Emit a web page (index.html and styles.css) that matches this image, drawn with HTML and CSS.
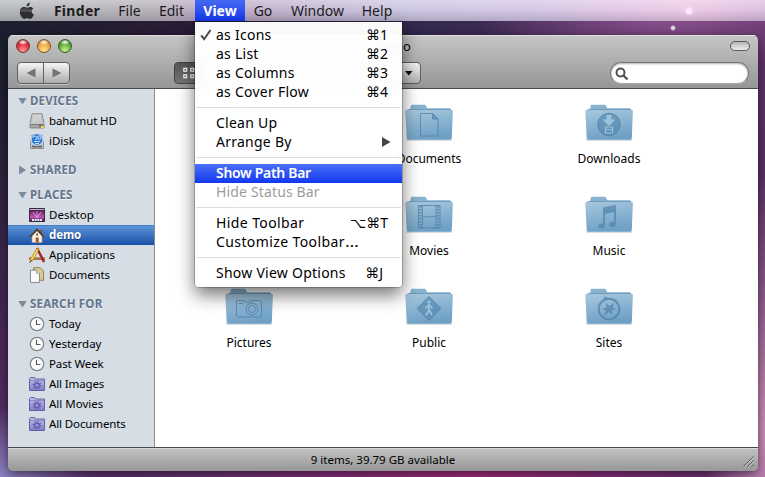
FILE: index.html
```html
<!DOCTYPE html>
<html lang="en">
<head>
<meta charset="utf-8">
<title>Finder</title>
<link rel="stylesheet" href="styles.css">
</head>
<body>
<svg class="defs" width="0" height="0" aria-hidden="true">
  <defs>
    <linearGradient id="fg" x1="0" y1="0" x2="0.25" y2="1"><stop offset="0" stop-color="#a9c9de"/><stop offset="1" stop-color="#6fa1c6"/></linearGradient>
    <linearGradient id="sg" x1="0" y1="0" x2="0" y2="1"><stop offset="0" stop-color="#c3c0ee"/><stop offset="1" stop-color="#837cc4"/></linearGradient>
    <linearGradient id="dg" x1="0" y1="0" x2="0" y2="1"><stop offset="0" stop-color="#351040"/><stop offset=".65" stop-color="#c058b0"/><stop offset="1" stop-color="#301a50"/></linearGradient>
    <symbol id="folder" viewBox="0 0 48 37">
      <path d="M.6 35.4h46.2v1.2H1.5z" fill="#6a7f90" opacity=".5"/>
      <path d="M2 5.500h3l.8-3.700Q6 .8 7 .8h12.500q1 0 1.500 1l1.300 2.500h22q1.700 0 1.700 2V9H2z" fill="#88b2ce"/>
      <path d="M.3 7.300Q.2 6 1.500 6h2L5 5h40l1 1h.7q1.300 0 1.200 1.300L46.800 34q-.1 1.700-1.500 1.700H3.200q-1.400 0-1.500-1.700z" fill="url(#fg)"/>
      <path d="M3.500 5.500H46" stroke="#6c9dbd" fill="none"/>
    </symbol>
    <symbol id="clock" viewBox="0 0 16 16">
      <circle cx="8" cy="8" r="6.700" fill="#fdfdfd" stroke="#85878b" stroke-width="1.300"/>
      <path d="M7.500 3.800v4.700h4" fill="none" stroke="#55585c" stroke-width="1.100"/>
    </symbol>
    <symbol id="smart" viewBox="0 0 16 16">
      <path d="M.5 14.500v-12l1-1h4l1 1.500h9v11.500z" fill="url(#sg)" stroke="#6560a5"/>
      <path d="M1 4.500h14" stroke="#8f8bc8"/>
      <circle cx="8" cy="9.300" r="2.300" fill="none" stroke="#6560b0" stroke-width="1.500"/>
      <circle cx="8" cy="9.300" r="3.600" fill="none" stroke="#6560b0" stroke-width="1.300" stroke-dasharray="1.400 1.400"/>
    </symbol>
  </defs>
</svg>

<header class="menubar">
  <svg class="apple" viewBox="0 0 16 18" width="16" height="18"><path d="M10.800.5q.2 1.700-.8 2.900T7.600 4.500q-.2-1.600.8-2.700T10.800.5z" fill="#333"/><path d="M8 5.700c.9 0 1.700-.8 3.300-.8 1.300 0 2.400.6 3 1.600-2.600 1.600-2.200 4.900.6 6-.7 2.100-2.200 4.400-3.700 4.400-1.100 0-1.500-.7-2.900-.7s-1.900.7-2.900.7C3.300 16.900.8 13.100.8 9.800c0-3 1.900-4.800 4-4.800 1.400 0 2.300.7 3.200.7z" fill="#2d2d2f"/><path d="M1.500 8Q4 5.500 8 6.500t5-.3Q11.500 8 12 10H1z" fill="#777" opacity=".45"/></svg>
  <span class="mb finder">Finder</span><span class="mb file">File</span><span class="mb edit">Edit</span><span class="mb view">View</span><span class="mb go">Go</span><span class="mb win">Window</span><span class="mb help">Help</span>
</header>

<main class="window">
  <div class="titlebar">
    <div class="lights"><i class="red"></i><i class="amber"></i><i class="green"></i></div>
    <div class="title">demo</div>
    <div class="pill"></div>
  </div>
  <div class="toolbar">
    <div class="nav"><span><svg width="10" height="10"><path d="M9.500 .5v9L.5 5z" fill="#747474"/></svg></span><span><svg width="10" height="10"><path d="M.5 .5v9l9-4.500z" fill="#747474"/></svg></span></div>
    <div class="viewbtn"><svg width="12" height="12"><g fill="none" stroke="#fff" stroke-width="1.200"><path d="M.8 1.300h2.900v2.900H.8zM7.800 1.300h2.900v2.900H7.800zM.8 7.800h2.900v2.900H.8zM7.800 7.800h2.900v2.900H7.800z"/></g></svg></div>
    <div class="action"><svg width="8" height="5"><path d="M0 0h7.500L3.800 4.500z" fill="#111"/></svg></div>
    <div class="search"><svg width="14" height="14"><circle cx="5.500" cy="5.500" r="4" fill="none" stroke="#505050" stroke-width="2"/><path d="M8.500 8.500l4 4" stroke="#505050" stroke-width="2.300"/></svg></div>
  </div>
  <div class="body">
    <nav class="sidebar">
      <h2 class="devices"><b class="down"></b><span>DEVICES</span></h2>
      <div class="row"><svg class="ic" viewBox="0 0 16 16"><path d="M3 .8h10l2 9.700v4.500H1v-4.500z" fill="#c8c8c8" stroke="#8c8c8c"/><path d="M4 2.500h8l1 6H3z" fill="#e9e9e9"/><path d="M3.500 4h9M3.200 6h10M3 8h10.500" stroke="#b5b5b5"/><path d="M1.500 11h13v3.500h-13z" fill="#777"/><path d="M3 12v2M5 12v2M7 12v2M9 12v2" stroke="#ddd"/><path d="M12 14h2.500" stroke="#ffe23a" stroke-width="2"/></svg><span class="tight">bahamut HD</span></div>
      <div class="row"><svg class="ic" viewBox="0 0 16 16"><path d="M3 2h10l1.500 9v4.500h-13V11z" fill="#c8c8c8" stroke="#8d8d8d"/><path d="M3 13.500h10" stroke="#666" stroke-width="2"/><circle cx="8" cy="6.500" r="5.900" fill="#3277d0" stroke="#d5e6fa"/><path d="M4 5q0-2 2-2t2 2-2 2M9 3h3v3H9zM5 8.500h6M6 10.500h4" stroke="#b5dcff" fill="none"/></svg><span>iDisk</span></div>
      <h2 class="shared"><b class="right"></b><span>SHARED</span></h2>
      <h2 class="places"><b class="down"></b><span>PLACES</span></h2>
      <div class="row"><svg class="ic" viewBox="0 0 16 16"><path d="M.5 1.500h15v13H.5z" fill="url(#dg)" stroke="#3a2745"/><path d="M1 2.500h14" stroke="#ddd" stroke-width=".8"/><path d="M8 11L4 5M8 11V4M8 11l4-6" stroke="#e7a6dc" stroke-width=".8"/><path d="M3 13h10" stroke="#eef" stroke-width="1.800" stroke-dasharray="2 .7"/></svg><span>Desktop</span></div>
      <div class="row selected"><svg class="ic" viewBox="0 0 16 16"><path d="M11 2h2v5h-2z" fill="#815233"/><path d="M3 8l5-5 5 5v6.500H3z" fill="#f6efe2" stroke="#a69a89" stroke-width=".6"/><path d="M1 9l7-7.500L15 9" fill="none" stroke="#5a3b27" stroke-width="1.600"/><path d="M6.700 9.500h3v5h-3z" fill="#b14e20"/><path d="M7.400 5.500h1.500v2H7.400z" fill="#4c3429"/></svg><span class="tight">demo</span></div>
      <div class="row"><svg class="ic" viewBox="0 0 16 16"><path d="M0 11.500h16" stroke="#80512c" stroke-width="2.500"/><path d="M0 11h16" stroke="#d2a269" stroke-width="1.200"/><path d="M8 1l7 14" stroke="#a82024" stroke-width="2.400"/><path d="M9 1.500L2 14" stroke="#ae7d23" stroke-width="3"/><path d="M8.500 2.500L2.200 13.500" stroke="#f4dc55" stroke-width="1.800"/><path d="M2.500 13L.7 16" stroke="#5b3519"/></svg><span>Applications</span></div>
      <div class="row"><svg class="ic" viewBox="0 0 16 16"><path d="M4.500.7h6.700l3.300 3.300v9.300h-10z" fill="#d7cb91" stroke="#8f875f"/><path d="M1.500 3.200h5.800l3.200 3.200v9.100h-9z" fill="#fafafa" stroke="#8c8c8c"/><path d="M7.300 3.200v3.200h3.200" fill="#ddd" stroke="#999" stroke-width=".7"/></svg><span class="tight">Documents</span></div>
      <h2 class="searchfor"><b class="down"></b><span>SEARCH FOR</span></h2>
      <div class="row"><svg class="ic"><use href="#clock"/></svg><span>Today</span></div>
      <div class="row"><svg class="ic"><use href="#clock"/></svg><span>Yesterday</span></div>
      <div class="row"><svg class="ic"><use href="#clock"/></svg><span class="tight">Past Week</span></div>
      <div class="row"><svg class="ic"><use href="#smart"/></svg><span class="tight">All Images</span></div>
      <div class="row"><svg class="ic"><use href="#smart"/></svg><span>All Movies</span></div>
      <div class="row"><svg class="ic"><use href="#smart"/></svg><span class="tight">All Documents</span></div>
    </nav>
    <section class="files">
      <figure><svg viewBox="0 0 48 37"><use href="#folder"/></svg></figure>
      <figure><svg viewBox="0 0 48 37"><use href="#folder"/><g class="em"><path d="M15.500 9.500h12l5.500 5.500v17H15.500z"/><path d="M27.500 9.500V15H33z" class="solid"/></g></svg><figcaption>Documents</figcaption></figure>
      <figure><svg viewBox="0 0 48 37"><use href="#folder"/><circle cx="24" cy="20.500" r="11.300" class="solid"/><path d="M21.500 11h5v4.500h4L24 22l-6.500-6.500h4z" fill="#9cc3dc"/><path d="M20.500 23h7v6h-7zM20.500 25.500h7" fill="none" stroke="#9cc3dc" stroke-width="1.200"/></svg><figcaption>Downloads</figcaption></figure>
      <figure><svg viewBox="0 0 48 37"><use href="#folder"/></svg></figure>
      <figure><svg viewBox="0 0 48 37"><use href="#folder"/><g class="em"><path d="M13.500 9.500h21.500v22.500H13.500zM17.500 9.500v22.500M31 9.500v22.500M17.500 20.800H31"/><path d="M15.500 10v22M33 10v22" stroke-width="2.500" stroke-dasharray="1.500 1.500"/></g></svg><figcaption>Movies</figcaption></figure>
      <figure><svg viewBox="0 0 48 37"><use href="#folder"/><path fill-rule="evenodd" d="M18 11.500L31 9v18q0 4-3.500 4T24 28.500t5-3V16l-9 2v11q0 3.500-3.500 3.500T13 30.200t5-3z" class="music"/></svg><figcaption>Music</figcaption></figure>
      <figure><svg viewBox="0 0 48 37"><use href="#folder"/><g class="em"><path d="M11.500 14q0-1.500 1.500-1.500h6l1 1.500h5l1-1.500h9q1.500 0 1.500 1.500v13q0 2-2 2h-21q-2 0-2-2z"/><circle cx="27" cy="21" r="6"/><circle cx="27" cy="21" r="3.500"/><path d="M14 15.500h4"/></g></svg><figcaption>Pictures</figcaption></figure>
      <figure><svg viewBox="0 0 48 37"><use href="#folder"/><path d="M24 8.500L36 20.500l-12 12-12-12z" class="solid"/><circle cx="24" cy="14" r="1.600" fill="#9cc3dc"/><path d="M24 16v6l-3 5.500M24 21.500l3 5.500M20.500 20.500L24 16.500l3.300 4" fill="none" stroke="#9cc3dc" stroke-width="1.700"/></svg><figcaption>Public</figcaption></figure>
      <figure><svg viewBox="0 0 48 37"><use href="#folder"/><g class="em"><circle cx="24" cy="21" r="10.300" stroke-width="2"/><circle cx="20.500" cy="10" r="1.200"/></g><path d="M29.500 14.500l-2 5 4 1.500-4.500 1.500.5 4.500-3.500-3-5.500 4 2.500-5.500-4-1.500 4.500-1.500-.5-4.500 3.500 3z" class="music"/></svg><figcaption>Sites</figcaption></figure>
    </section>
  </div>
  <footer class="status"><span>9 items, 39.79 GB available</span><svg class="grip" width="11" height="11"><path d="M.5 10.500l10-10M4.500 10.500l6-6M8.500 10.500l2-2" stroke="#555"/><path d="M1.700 10.700l9-9M5.700 10.700l5-5" stroke="#ddd" stroke-width=".7"/></svg></footer>
</main>

<div class="menu">
  <div class="mi"><svg class="check" width="12" height="12"><path d="M1.200 6.500l3 3.700L10.500 1" fill="none" stroke="#4c4c4c" stroke-width="2"/></svg><span>as Icons</span><kbd>⌘1</kbd></div>
  <div class="mi"><span>as List</span><kbd>⌘2</kbd></div>
  <div class="mi"><span>as Columns</span><kbd>⌘3</kbd></div>
  <div class="mi"><span>as Cover Flow</span><kbd>⌘4</kbd></div>
  <hr>
  <div class="mi"><span>Clean Up</span></div>
  <div class="mi"><span>Arrange By</span><svg class="sub" width="9" height="10"><path d="M0 0v10l8.500-5z" fill="#444"/></svg></div>
  <hr>
  <div class="mi hot"><span>Show Path Bar</span></div>
  <div class="mi off"><span>Hide Status Bar</span></div>
  <hr>
  <div class="mi"><span class="wide">Hide Toolbar</span><kbd>⌥⌘T</kbd></div>
  <div class="mi"><span class="wide">Customize Toolbar<span class="dots">…</span></span></div>
  <hr>
  <div class="mi"><span>Show View Options</span><kbd class="j">⌘J</kbd></div>
</div>
</body>
</html>
```
FILE: styles.css
```css
* { box-sizing: border-box; }
body {
  margin: 0; width: 765px; height: 477px; overflow: hidden; position: relative;
  font-family: "Noto Sans", "Open Sans", "DejaVu Sans", sans-serif; color: #000;
  background:
    radial-gradient(circle at 673px 28px, #ddd 0 1.500px, transparent 3px),
    radial-gradient(ellipse 190px 50px at 665px 18px, rgba(160,90,160,.75), transparent),
    radial-gradient(ellipse 60px 260px at 765px 430px, #c98bb5, transparent),
    radial-gradient(ellipse 90px 70px at 0 477px, #8a80c0, transparent),
    radial-gradient(ellipse 330px 60px at 470px 477px, #9a2878, transparent),
    linear-gradient(180deg, transparent 0, transparent 80px, #4a2858 360px, #56306a 477px),
    linear-gradient(90deg, #1c1f2d 0, #2b1c35 180px, #33284e 420px, #5b3263 765px);
}
.defs { position: absolute; }
.menubar {
  height: 21px; display: flex; align-items: center;
  background:
    radial-gradient(circle at 689px 11px, #ffe8ff 0 2px, transparent 5px),
    linear-gradient(180deg, rgba(255,255,255,.3), rgba(255,255,255,0) 50%, rgba(70,70,90,.22)),
    linear-gradient(90deg, #b4b8bb 0, #b7b2b9 150px, #bcaac0 190px, #c2b2cc 260px, #cbc5df 400px, #d6c6e4 550px, #edc9e6 690px, #dbbede 765px);
}
.apple { margin-left: 19px; margin-right: 8px; }
.mb { height: 21px; line-height: 22px; font-size: 14px; color: #1c1c1e; text-align: center; white-space: nowrap; }
.finder { width: 68px; font-weight: 700; letter-spacing: .3px; }
.file { width: 37px; } .edit { width: 47px; }
.view { width: 50px; color: #fff; font-weight: 700; background: linear-gradient(#4469f0, #1638ef); }
.go { width: 36px; } .win { width: 73px; } .help { width: 46px; }

.window {
  margin: 14px 7px 0 8px; height: 436px; display: flex; flex-direction: column;
  border-radius: 5px; overflow: hidden; background: linear-gradient(#c6c6c6, #969696 53px, #969696);
  box-shadow: 0 2px 8px rgba(0,0,0,.5); width: 750px;
}
.titlebar { height: 21px; flex: none; display: flex; align-items: center; border-top: 1px solid #dedede; padding: 0 8px; position: relative; }
.lights { display: flex; gap: 7px; }
.lights i { width: 14px; height: 14px; border-radius: 50%; border: 1px solid #6f3832; }
.red { background: radial-gradient(ellipse 5px 3px at 50% 18%, #fff, transparent), radial-gradient(circle at 50% 85%, #ff9c9c, #e02b35 55%, #8f1820); }
.amber { background: radial-gradient(ellipse 5px 3px at 50% 18%, #fff, transparent), radial-gradient(circle at 50% 85%, #ffe88a, #f0a343 55%, #9c5a1c); }
.lights .amber { border-color: #7e5128; }
.green { background: radial-gradient(ellipse 5px 3px at 50% 18%, #fff, transparent), radial-gradient(circle at 50% 85%, #c9f28a, #5cab38 55%, #2c6a1c); }
.lights .green { border-color: #35592a; }
.title { font-size: 13px; margin-left: 303px; letter-spacing: .2px; line-height: 16px; padding-bottom: 1px; }
.pill { margin-left: auto; width: 20px; height: 10px; border: 1px solid #5b5b5b; border-radius: 5px; background: linear-gradient(#b5b5b5, #eee); }
.toolbar { height: 33px; flex: none; display: flex; align-items: flex-start; padding: 6px 9px 0; border-bottom: 1px solid #4a4a4a; }
.nav { display: flex; width: 53px; height: 22px; border: 1px solid #606060; border-radius: 4px; background: linear-gradient(#f6f6f6, #ababab); box-shadow: 0 1px 0 #c5c5c5; }
.nav span { flex: 1; display: flex; align-items: center; justify-content: center; }
.nav span + span { border-left: 1px solid #606060; }
.viewbtn { margin-left: 104px; width: 28px; height: 22px; border-radius: 4px 0 0 4px; border: 1px solid #444; background: linear-gradient(#555, #747474); display: flex; align-items: center; padding-left: 8px; }
.action { margin-left: 179px; width: 40px; height: 22px; border: 1px solid #606060; border-radius: 4px; background: linear-gradient(#f4f4f4, #b0b0b0); display: flex; align-items: center; justify-content: flex-end; padding-right: 7px; }
.search { margin-left: auto; width: 139px; height: 22px; border-radius: 11px; background: #fff; border: 1px solid #777; border-bottom-color: #aaa; box-shadow: inset 0 1px 2px rgba(0,0,0,.3); padding: 4px 0 0 4px; display: flex; }
.body { flex: 1; display: flex; min-height: 0; }
.sidebar { width: 147px; background: #d6dde5; border-right: 1px solid #8a8a8a; padding-top: 2px; }
.sidebar h2 { margin: 0; height: 20px; display: flex; align-items: center; font-size: 11.500px; line-height: 20px; font-weight: 700; letter-spacing: .2px; color: #65758a; text-shadow: 0 1px 0 #eef2f6; padding-left: 10px; }
.sidebar h2 span { margin-left: 3px; }
.sidebar .shared { margin-top: 9px; } .sidebar .places { margin-top: 5px; } .sidebar .searchfor { margin-top: 9px; }
.down { width: 9px; height: 7px; background: #7e8a9a; clip-path: polygon(0 0, 100% 0, 50% 100%); }
.right { width: 9px; height: 9px; background: #7e8a9a; clip-path: polygon(12% 0, 90% 50%, 12% 100%); }
.row { height: 20px; display: flex; align-items: center; padding-left: 21px; font-size: 11.500px; line-height: 20px; white-space: nowrap; }
.tight { letter-spacing: -.12px; }
.ic { width: 16px; height: 16px; margin-right: 4px; flex: none; }
.selected { color: #fff; font-weight: 700; line-height: 18px; background: linear-gradient(#5b94d6, #1a51a8); border-top: 1px solid #4580c4; text-shadow: 0 1px 1px #1c3c78; }
.selected span { padding-bottom: 1px; }
.files { flex: 1; background: #fff; display: grid; grid-template-columns: repeat(3, 180px); grid-auto-rows: 92px; padding: 15px 0 0 4px; }
figure { margin: 0; display: flex; flex-direction: column; align-items: center; }
figure svg { width: 48px; height: 37px; }
figcaption { font-size: 12px; line-height: 18px; margin-top: 9px; }
.em { fill: none; stroke: #4f80a8; stroke-opacity: .75; }
.solid { fill: #5286ae; fill-opacity: .65; stroke: #4f80a8; stroke-opacity: .7; }
.music { fill: #5286ae; fill-opacity: .75; }
.status { height: 24px; flex: none; border-top: 1px solid #4a4a4a; background: linear-gradient(#c2c2c2, #979797); box-shadow: inset 0 1px 0 #d8d8d8; display: flex; align-items: center; justify-content: center; font-size: 11.500px; position: relative; }
.grip { position: absolute; right: 4px; bottom: 4px; }

.menu {
  position: absolute; left: 195px; top: 22px; width: 207px; height: 265px; padding: 4px 0;
  background: rgba(255,255,255,.975); border-radius: 0 0 4px 4px;
  box-shadow: 0 0 0 1px rgba(0,0,0,.2), 0 8px 18px rgba(0,0,0,.55);
}
.mi { height: 19px; display: flex; align-items: center; padding: 0 14px 0 21px; font-size: 14px; line-height: 17px; letter-spacing: .25px; white-space: nowrap; position: relative; }
.mi > span, .mi kbd { padding-bottom: 2px; }
.menu hr { margin: 5px 1px 6px; border: 0; height: 1px; background: #dedede; }
.mi kbd { margin-left: auto; font: inherit; letter-spacing: 0; }
.mi .j { padding-right: 5px; }
.mi .wide { letter-spacing: .4px; }
.dots { letter-spacing: 0; display: inline-block; transform: scaleX(1.25); transform-origin: 0 50%; }
.check { position: absolute; left: 5px; top: 3px; }
.sub { margin-left: auto; margin-right: -3px; margin-bottom: 1px; }
.hot { color: #fff; font-weight: 600; letter-spacing: -.3px; background: linear-gradient(#4c70f7, #1138ef); }
.off { color: #9c9c9c; letter-spacing: .15px; }
```
